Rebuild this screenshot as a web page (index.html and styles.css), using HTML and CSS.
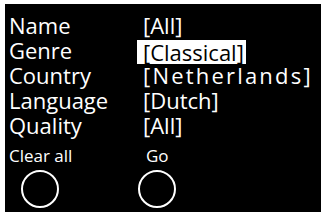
FILE: index.html
```html
<!DOCTYPE html>
<html>
<head>
<meta charset="utf-8">
<link rel="stylesheet" href="styles.css">
</head>
<body>
<div class="screen">
  <div class="list">
    <div class="row"><span class="label">Name</span><span class="value">[All]</span></div>
    <div class="row"><span class="label">Genre</span><span class="value selected">[Classical]</span></div>
    <div class="row"><span class="label">Country</span><span class="value wide">[Netherlands]</span></div>
    <div class="row"><span class="label">Language</span><span class="value">[Dutch]</span></div>
    <div class="row"><span class="label">Quality</span><span class="value">[All]</span></div>
  </div>
  <div class="keys">
    <div class="key key-left"><span class="key-label">Clear all</span><span class="ring"></span></div>
    <div class="key key-right"><span class="key-label">Go</span><span class="ring"></span></div>
  </div>
</div>
</body>
</html>
```
FILE: styles.css
```css
html, body {
  margin: 0;
  padding: 0;
  background: #ffffff;
}
body {
  width: 321px;
  height: 215px;
  overflow: hidden;
  font-family: "Open Sans", "Noto Sans", sans-serif;
  color: #ffffff;
}
.screen {
  margin: 4px 0 0 5px;
  width: 316px;
  height: 208px;
  background: #000000;
  padding: 9px 0 0 4px;
  box-sizing: border-box;
}
.list {
  display: flex;
  flex-direction: column;
}
.row {
  display: flex;
  height: 25px;
  align-items: center;
  font-size: 22px;
  line-height: 25px;
}
.label {
  width: 134px;
}
.value.wide {
  letter-spacing: 2.2px;
}
.value.selected {
  background: #ffffff;
  color: #000000;
  margin: 2px 0 0 -6px;
  padding: 0 2px 0 6px;
  line-height: 24px;
  height: 24px;
}
.keys {
  display: flex;
  margin-top: 8px;
}
.key {
  display: flex;
  flex-direction: column;
}
.key-left {
  width: 134px;
}
.key-right {
  padding-left: 3px;
}
.key-label {
  font-size: 17px;
  line-height: 20px;
  height: 20px;
}
.ring {
  display: block;
  width: 38px;
  height: 38px;
  border: 2px solid #ffffff;
  border-radius: 50%;
  box-sizing: border-box;
  margin-top: 4px;
}
.key-left .ring {
  margin-left: 12px;
}
.key-right .ring {
  margin-left: -8px;
}
```
